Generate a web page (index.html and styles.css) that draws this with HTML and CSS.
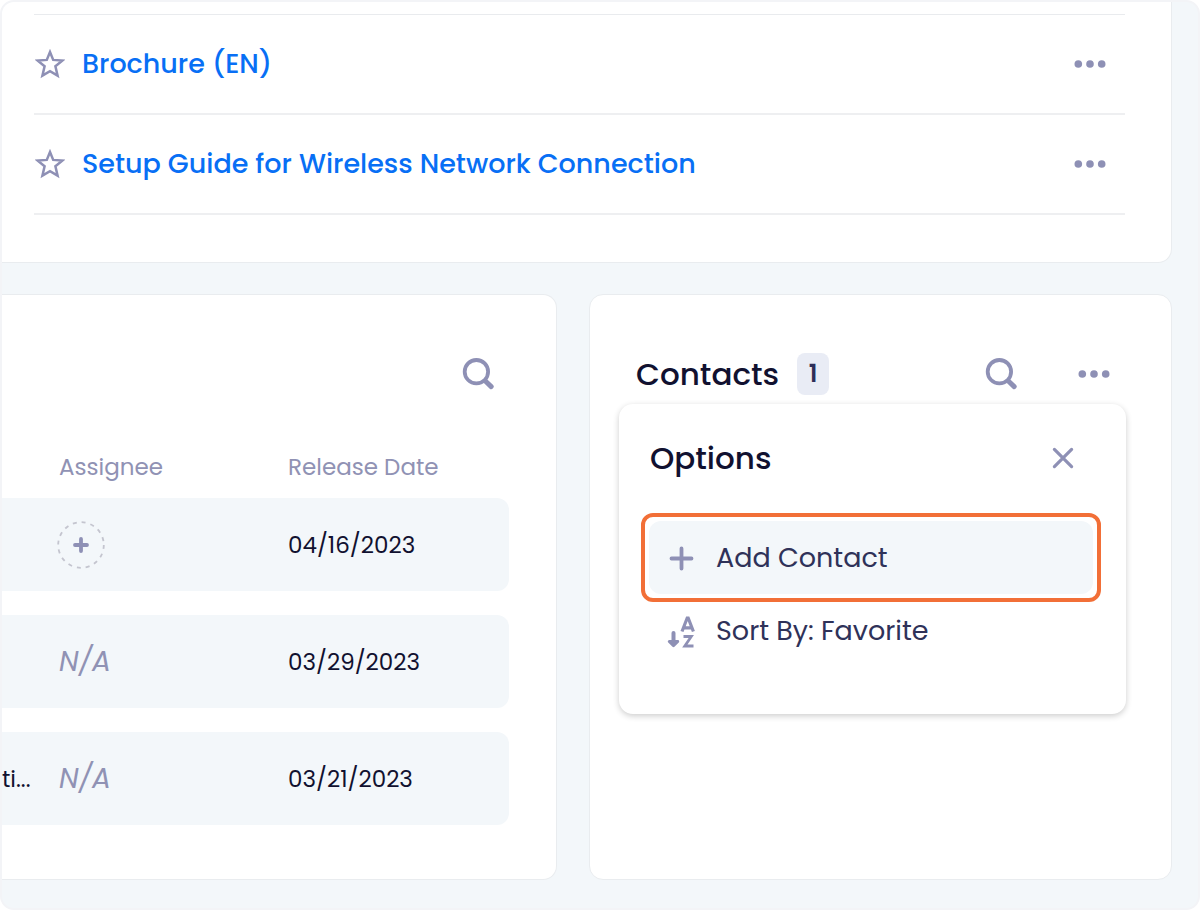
FILE: index.html
```html
<!DOCTYPE html>
<html lang="en">
<head>
<meta charset="utf-8">
<meta name="viewport" content="width=device-width, initial-scale=1">
<title>Product dashboard</title>
<link rel="stylesheet" href="styles.css">
</head>
<body>
<svg class="sprite" aria-hidden="true">
  <symbol id="star" viewBox="0 0 30 30"><path d="M15 3l3.200 7.900 9 .7-6.800 5.600 2.200 9.500L15 22.200l-7.600 4.500 2.200-9.500-6.800-5.600 9-.7z" fill="none" stroke="currentColor" stroke-width="2.500"/></symbol>
  <symbol id="dots" viewBox="0 0 32 8"><circle cx="4.3" cy="4" r="3.8"/><circle cx="16" cy="4" r="3.8"/><circle cx="27.7" cy="4" r="3.8"/></symbol>
  <symbol id="search" viewBox="0 0 32 32"><circle cx="14.4" cy="13.700" r="11.700" fill="none" stroke="currentColor" stroke-width="3.800"/><path d="M23.600 23.200l5.600 5.400" stroke="currentColor" stroke-width="5" stroke-linecap="round"/></symbol>
</svg>
<main class="frame">
  <section class="card documents" aria-label="Documents">
    <ul class="doc-list">
      <li class="doc">
        <button class="icon-button" aria-label="Add Brochure to favorites"><svg class="star"><use href="#star"/></svg></button>
        <a class="doc-link" href="#">Brochure (EN)</a>
        <button class="icon-button" aria-label="Brochure options"><svg class="dots"><use href="#dots"/></svg></button>
      </li>
      <li class="doc">
        <button class="icon-button" aria-label="Add Setup Guide to favorites"><svg class="star"><use href="#star"/></svg></button>
        <a class="doc-link" href="#">Setup Guide for Wireless Network Connection</a>
        <button class="icon-button" aria-label="Setup Guide options"><svg class="dots"><use href="#dots"/></svg></button>
      </li>
    </ul>
  </section>
  <div class="columns">
    <section class="card releases" aria-label="Releases">
      <header class="card-header">
        <button class="icon-button push" aria-label="Search releases"><svg class="search"><use href="#search"/></svg></button>
      </header>
      <table class="table">
        <thead>
          <tr><th class="col-name"></th><th class="col-assignee">Assignee</th><th>Release Date</th></tr>
        </thead>
        <tbody>
          <tr>
            <td></td>
            <td><button class="icon-button assign-button" aria-label="Assign"><svg class="assign" viewBox="0 0 48 48"><circle cx="24" cy="24" r="22.800" fill="none" stroke="#c4c5cf" stroke-width="1.800" stroke-dasharray="4 4.950"/><path d="M24 18v12M18 24h12" stroke="currentColor" stroke-width="3.800" stroke-linecap="round"/></svg></button></td>
            <td>04/16/2023</td>
          </tr>
          <tr><td></td><td class="none">N/A</td><td>03/29/2023</td></tr>
          <tr><td>ti...</td><td class="none">N/A</td><td>03/21/2023</td></tr>
        </tbody>
      </table>
    </section>
    <section class="card contacts">
      <header class="card-header">
        <h2 class="title">Contacts</h2>
        <span class="count">1</span>
        <button class="icon-button push" aria-label="Search contacts"><svg class="search"><use href="#search"/></svg></button>
        <button class="icon-button more" aria-label="Contact options"><svg class="dots"><use href="#dots"/></svg></button>
      </header>
      <div class="menu">
        <header class="menu-header">
          <h3 class="title">Options</h3>
          <button class="icon-button" aria-label="Close"><svg class="close" viewBox="0 0 22 22"><path d="M2.400 2.400l17.200 17.200M19.600 2.400L2.400 19.600" stroke="currentColor" stroke-width="3.200" stroke-linecap="round"/></svg></button>
        </header>
        <ul class="menu-list">
          <li class="highlight">
            <button class="menu-item active"><svg class="menu-icon" viewBox="0 0 32 34"><path d="M16.500 7.500v20M6.500 17.500h20" stroke="currentColor" stroke-width="3.800" stroke-linecap="round"/></svg>Add Contact</button>
          </li>
          <li>
            <button class="menu-item"><svg class="menu-icon" viewBox="0 0 32 34"><g fill="none" stroke="currentColor" stroke-width="3.200"><path d="M17 17.500L22.200 4h1L28.400 17.500M19 13.800h7.500"/><path d="M18.500 22.500h7.800l-6.500 9.500h8.700" stroke-width="2.800"/><path d="M8.500 19v8" stroke-width="4" stroke-linecap="round"/></g><path d="M4.200 27.500h8.600l-4.300 4.300z" stroke="currentColor" stroke-width="2.800" stroke-linejoin="round"/></svg>Sort By: Favorite</button>
          </li>
        </ul>
      </div>
    </section>
  </div>
</main>
</body>
</html>
```
FILE: styles.css
```css
* { box-sizing: border-box; }
body {
  margin: 0;
  background: #fff;
  color: #111130;
  font-family: Poppins, Inter, "Open Sans", sans-serif;
  font-size: 23px;
}
.sprite { position: absolute; width: 0; height: 0; }
svg { display: block; fill: currentColor; }
ul { margin: 0; padding: 0; list-style: none; }
.frame {
  display: flex;
  flex-direction: column;
  gap: 31px;
  min-height: 100vh;
  padding: 0 26px 28px 0;
  background: #f3f7fa;
  border: 2px solid #f3f4f7;
  border-radius: 14px;
}
.card {
  background: #fff;
  border: 1px solid #e9ecef;
  border-radius: 14px;
}
.icon-button {
  flex: none;
  padding: 0;
  border: 0;
  background: none;
  color: #8e90b5;
  cursor: pointer;
}
.push { margin-left: auto; }
.star { width: 30px; height: 30px; }
.dots { width: 32px; height: 8px; }
.search { width: 32px; height: 32px; }
.close { width: 22px; height: 22px; }

.documents {
  padding: 12px 46px 47px 32px;
  border-width: 0 1px 1px 0;
  border-radius: 12px 0 14px 0;
}
.doc-list { border-top: 1px solid #e9ebee; }
.doc {
  display: flex;
  align-items: center;
  gap: 17px;
  min-height: 100px;
  padding: 0 19px 0 1px;
  border-bottom: 2px solid #eeeff1;
}
.doc-link {
  flex: 1;
  color: #086ff5;
  font-size: 27px;
  font-weight: 500;
  text-decoration: none;
}

.columns {
  display: grid;
  grid-template-columns: 555fr 583fr;
  gap: 32px;
  flex: 1;
}
.releases {
  padding: 49px 47px 30px 0;
  border-left: 0;
  border-radius: 0 14px 14px 0;
}
.card-header {
  display: flex;
  align-items: center;
  height: 60px;
}
.releases .card-header { padding-right: 15px; }
.table {
  width: 100%;
  table-layout: fixed;
  border-spacing: 0 24px;
}
.col-name { width: 57px; }
.col-assignee { width: 229px; }
.table th {
  height: 46px;
  padding: 32px 0 0;
  color: #9092b4;
  font-size: 23px;
  font-weight: 400;
  line-height: 14px;
  text-align: left;
}
.table td {
  height: 93px;
  padding: 0;
  background: #f3f7fa;
}
.table td:last-child { border-radius: 0 12px 12px 0; }
.table .none {
  color: #9092b4;
  font-size: 28px;
  font-style: italic;
}
.assign-button { display: block; margin-left: -2px; }
.assign { width: 48px; height: 48px; }

.contacts {
  position: relative;
  padding: 49px 61px 48px 46px;
}
.title {
  margin: 0;
  font-size: 31px;
  font-weight: 500;
}
.count {
  min-width: 32px;
  margin-left: 18px;
  border-radius: 8px;
  background: #e9ecf5;
  color: #2d2e58;
  font-size: 24px;
  font-weight: 600;
  line-height: 42px;
  text-align: center;
}
.more { margin-left: 61px; }

.menu {
  position: absolute;
  top: 109px;
  left: 29px;
  right: 45px;
  padding: 30px 33px 47px 30px;
  background: #fff;
  border-radius: 14px;
  box-shadow: 0 2px 6px rgba(0, 0, 0, 0.2);
}
.menu-header {
  display: flex;
  align-items: center;
  justify-content: space-between;
  height: 48px;
  margin-bottom: 39px;
  padding: 0 19px 0 1px;
}
.highlight {
  margin: -8px;
  padding: 4px;
  border: 4px solid #f26f37;
  border-radius: 12px;
}
.menu-item {
  display: flex;
  align-items: center;
  gap: 19px;
  width: 100%;
  height: 73px;
  padding: 0 16px;
  border: 0;
  border-radius: 12px;
  background: none;
  color: #2f3259;
  font-family: inherit;
  font-size: 27px;
  text-align: left;
  cursor: pointer;
}
.active { background: #f3f7fa; }
.menu-icon { width: 32px; height: 34px; color: #8e90b5; }
```
